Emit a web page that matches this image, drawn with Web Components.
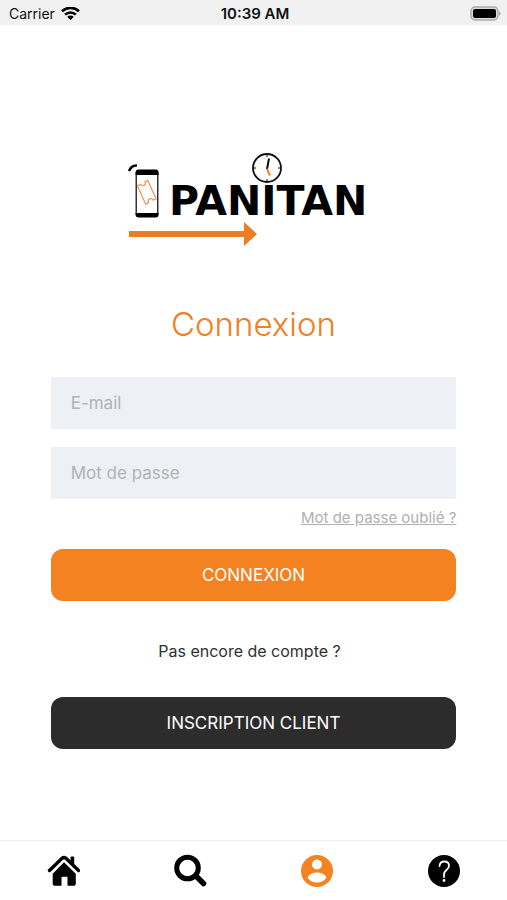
<!DOCTYPE html>
<html lang="fr">
<head>
<meta charset="utf-8">
<meta name="viewport" content="width=device-width, initial-scale=1">
<title>Panitan – Connexion</title>
<style>
  body { margin: 0; background: #fff; font-family: Inter, "Liberation Sans", sans-serif; color: #303030; }
</style>
</head>
<body>
<panitan-app></panitan-app>
<script>
  const define = (name, html, setup) => {
    const template = document.createElement('template');
    template.innerHTML = html;
    customElements.define(name, class extends HTMLElement {
      connectedCallback() {
        if (this.shadowRoot) return;
        const root = this.attachShadow({ mode: 'open' });
        root.append(template.content.cloneNode(true));
        if (setup) setup(this, root);
      }
    });
  };

  define('status-bar', `
    <style>
      :host { display: grid; grid-template-columns: 1fr auto 1fr; align-items: center; height: 25px; padding: 2px 6px 0 9px; box-sizing: border-box; background: #f1f1f1; color: #111; font-size: 14px; line-height: 20px; }
      .carrier { display: flex; align-items: center; gap: 6px; }
      .time { font-size: 15px; font-weight: 600; }
      .battery { justify-self: end; }
      svg { display: block; }
    </style>
    <span class="carrier"><span>Carrier</span>
      <svg width="19" height="14" viewBox="0 0 19 14" fill="none" stroke="#000" stroke-width="2.6" aria-hidden="true">
        <path d="M1 4.300a12.2 12.2 0 0 1 17 0M4.1 7.600a7.8 7.8 0 0 1 10.8 0"/>
        <path d="M6.3 9.800a4.6 4.6 0 0 1 6.4 0L9.5 13.200z" fill="#000" stroke="none"/>
      </svg>
    </span>
    <time class="time">10:39 AM</time>
    <svg class="battery" width="31" height="16" viewBox="0 0 31 16" aria-hidden="true">
      <rect x="1" y="1" width="27" height="13" rx="4" fill="#ddd" stroke="#aaa" stroke-width="1.4"/>
      <rect x="3" y="3" width="23" height="9" rx="2" fill="#000"/>
      <path d="M29 5l2 2.5-2 2.5z" fill="#aaa"/>
    </svg>`);

  define('brand-logo', `
    <style>
      :host { display: block; }
      svg { display: block; margin: 0 auto; }
      text { font: 700 41px "DejaVu Sans", sans-serif; }
    </style>
    <svg width="253" height="96" viewBox="0 0 253 96" role="img" aria-label="Panitan">
      <path d="M2 19q2.500-6 8-5.500" fill="none" stroke="#000" stroke-width="2.500"/>
      <rect x="9.200" y="18.500" width="21.600" height="46" rx="3" fill="#fff" stroke="#000" stroke-width="1.200"/>
      <path d="M8.600 23v-2.500q0-3 3-3h17q3 0 3 3V23zM8.600 61h23v1.500q0 3-3 3h-17q-3 0-3-3z" fill="#000"/>
      <path d="M10.300 33.800l3-1.600q1.800 2.300 3.900 1.100t.8-3.600l2.700-1.400 8.400 18.400-2.800 1.500q-1.800-2.300-3.900-1.100t-.8 3.600l-2.900 1.500z" fill="none" stroke="#ee9150" stroke-width="1.200" stroke-linejoin="round"/>
      <circle cx="140" cy="16" r="14" fill="#fff" stroke="#111" stroke-width="1.800"/>
      <path d="M140 2v3M140 27v3M126 16h3M151 16h3" stroke="#111" stroke-width="1"/>
      <path d="M140 17l2-10.500" stroke="#111" stroke-width="2"/>
      <path d="M140 17l3 6.500" stroke="#f58220" stroke-width="2"/>
      <text x="42" y="63">PANITAN</text>
      <path d="M2 79h115v-9l13 12-13 12v-9H2z" fill="#eb7d22"/>
    </svg>`);

  define('text-field', `
    <style>
      :host { display: block; }
      input { display: block; width: 100%; height: 52px; box-sizing: border-box; padding: 0 20px; border: 0; border-radius: 0; background: #edf1f5; font: 17px Inter, "Liberation Sans", sans-serif; color: #303030; }
      input::placeholder { color: #b0b3b5; opacity: 1; }
    </style>
    <input>`, (host, root) => {
      const input = root.querySelector('input');
      input.type = host.getAttribute('type');
      input.placeholder = host.getAttribute('label');
      input.setAttribute('aria-label', host.getAttribute('label'));
    });

  define('action-button', `
    <style>
      :host { display: block; }
      button { display: block; width: 100%; height: 52px; padding: 0; border: 0; border-radius: 12px; background: var(--button-color, #f58220); color: #fff; font: 17px Inter, "Liberation Sans", sans-serif; cursor: pointer; }
    </style>
    <button type="button"><slot></slot></button>`);

  define('login-form', `
    <style>
      :host { display: flex; flex-direction: column; padding: 0 10%; }
      h1 { margin: 0 0 31px; font-size: 33px; line-height: 44px; font-weight: 350; text-align: center; color: #f08024; }
      .fields { display: grid; gap: 18px; }
      a { align-self: flex-end; margin: 8px 0 21px; font-size: 15px; line-height: 21px; color: #b0b0b0; }
      p { margin: 38px 0 34px; padding-right: 8px; font-size: 16px; line-height: 24px; text-align: center; }
      .dark { --button-color: #2c2c2c; }
    </style>
    <h1>Connexion</h1>
    <div class="fields">
      <text-field type="email" label="E-mail"></text-field>
      <text-field type="password" label="Mot de passe"></text-field>
    </div>
    <a href="#">Mot de passe oublié ?</a>
    <action-button>CONNEXION</action-button>
    <p>Pas encore de compte ?</p>
    <action-button class="dark">INSCRIPTION CLIENT</action-button>`);

  define('tab-link', `
    <style>
      :host { display: block; }
      a { display: flex; align-items: center; justify-content: center; height: 59px; color: inherit; }
      ::slotted(svg) { display: block; width: 34px; height: 34px; }
    </style>
    <a href="#"><slot></slot></a>`, (host, root) => {
      root.querySelector('a').setAttribute('aria-label', host.getAttribute('label'));
    });

  define('tab-bar', `
    <style>
      :host { display: block; border-top: 1px solid #eee; color: #000; }
      nav { display: grid; grid-template-columns: repeat(4, 1fr); }
      .active { color: #f58220; }
    </style>
    <nav>
      <tab-link label="Accueil"><svg viewBox="0 0 34 34" fill="currentColor">
        <path d="M3.500 16.500L16 4.300q2-1.600 4 0L32.500 16.500" fill="none" stroke="currentColor" stroke-width="3.400" stroke-linecap="round"/>
        <path d="M24.500 3.500q0-1 1-1h1.700q1 0 1 1V13l-3.700-3.500z"/>
        <path d="M18 8.200L29.800 19.700v9.500q0 2.600-2.600 2.600h-5.700v-8q0-1-1-1h-4q-1 0-1 1v8H9.300q-2.600 0-2.600-2.600v-9.500z"/>
      </svg></tab-link>
      <tab-link label="Rechercher"><svg viewBox="0 0 34 34" fill="none" stroke="currentColor">
        <circle cx="14.500" cy="14" r="10.800" stroke-width="5"/>
        <path d="M23 22l7.500 7.500" stroke-width="5.500" stroke-linecap="round"/>
      </svg></tab-link>
      <tab-link label="Compte" class="active"><svg viewBox="0 0 34 34" fill="currentColor">
        <circle cx="17" cy="17" r="16"/>
        <circle cx="17" cy="10.500" r="5" fill="#fff"/>
        <path d="M7.500 23.500q3-5 9.500-5t9.500 5q-3 5-9.500 5t-9.500-5z" fill="#fff"/>
      </svg></tab-link>
      <tab-link label="Aide"><svg viewBox="0 0 34 34" fill="currentColor">
        <circle cx="17" cy="17" r="16"/>
        <path d="M12.500 12q.5-4.500 4.700-4.500 4.800 0 4.800 4.300 0 2.200-2.500 4.200-2.500 2-2.500 4.500V23" fill="none" stroke="#fff" stroke-width="1.800" stroke-linecap="round"/>
        <circle cx="17" cy="26.500" r="1.400" fill="#fff"/>
      </svg></tab-link>
    </nav>`);

  define('panitan-app', `
    <style>
      :host { display: flex; flex-direction: column; min-height: 100vh; }
      main { flex: 1; display: flex; flex-direction: column; gap: 54px; padding: 127px 0 32px; }
    </style>
    <status-bar></status-bar>
    <main>
      <brand-logo></brand-logo>
      <login-form></login-form>
    </main>
    <tab-bar></tab-bar>`);
</script>
</body>
</html>
